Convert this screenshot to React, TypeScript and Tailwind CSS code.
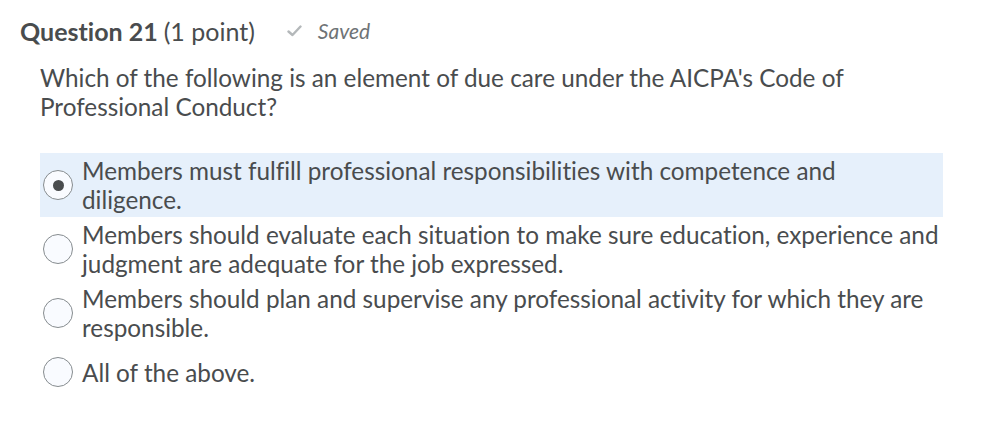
import React from 'react';

const options: React.ReactNode[] = [
  <>Members must fulfill professional responsibilities with competence and<br />diligence.</>,
  'Members should evaluate each situation to make sure education, experience and judgment are adequate for the job expressed.',
  'Members should plan and supervise any professional activity for which they are responsible.',
  'All of the above.',
];

const Radio: React.FC<{ checked: boolean }> = ({ checked }) => (
  <span className="flex h-[30px] w-[30px] shrink-0 items-center justify-center rounded-full border border-[#868c8f] bg-[#f9fbff]">
    {checked && <span className="h-[11px] w-[11px] rounded-full bg-[#494c4e]" />}
  </span>
);

const App: React.FC = () => {
  const selected = 0;
  return (
    <div
      className="min-h-[431px] w-[984px] bg-white px-[20px] pt-[16px] text-[#494c4e] [font-variant-ligatures:none]"
      style={{ fontFamily: 'Lato, "Open Sans", sans-serif' }}
    >
      <div className="flex items-center text-[25px] leading-[30px]">
        <span className="font-bold">Question 21</span>
        <span className="ml-[6px]">(1 point)</span>
        <span className="ml-[32px] flex items-center gap-[16px] text-[21px] italic text-[#6e7376]">
          <svg width="15" height="12" viewBox="0 0 15 12" fill="none">
            <path d="M1.5 6.5 L5.5 10 L13.5 1.5" stroke="#b4b8ba" strokeWidth="2.4" strokeLinecap="round" strokeLinejoin="round" />
          </svg>
          Saved
        </span>
      </div>
      <p className="ml-[20px] mt-[17px] w-[903px] text-[24.3px] leading-[29px]">
        Which of the following is an element of due care under the AICPA's Code of Professional Conduct?
      </p>
      <div className="ml-[20px] mt-[32px] w-[903px]">
        {options.map((opt, i) => (
          <div
            key={i}
            className={`flex items-center gap-[9px] pl-[3px] ${i === options.length - 1 ? 'py-[12px]' : 'py-[3px]'} ${i === selected ? 'bg-[#e6f0fb]' : ''}`}
          >
            <Radio checked={i === selected} />
            <span className="text-[24.3px] leading-[29px]">{opt}</span>
          </div>
        ))}
      </div>
    </div>
  );
};

export default App;
